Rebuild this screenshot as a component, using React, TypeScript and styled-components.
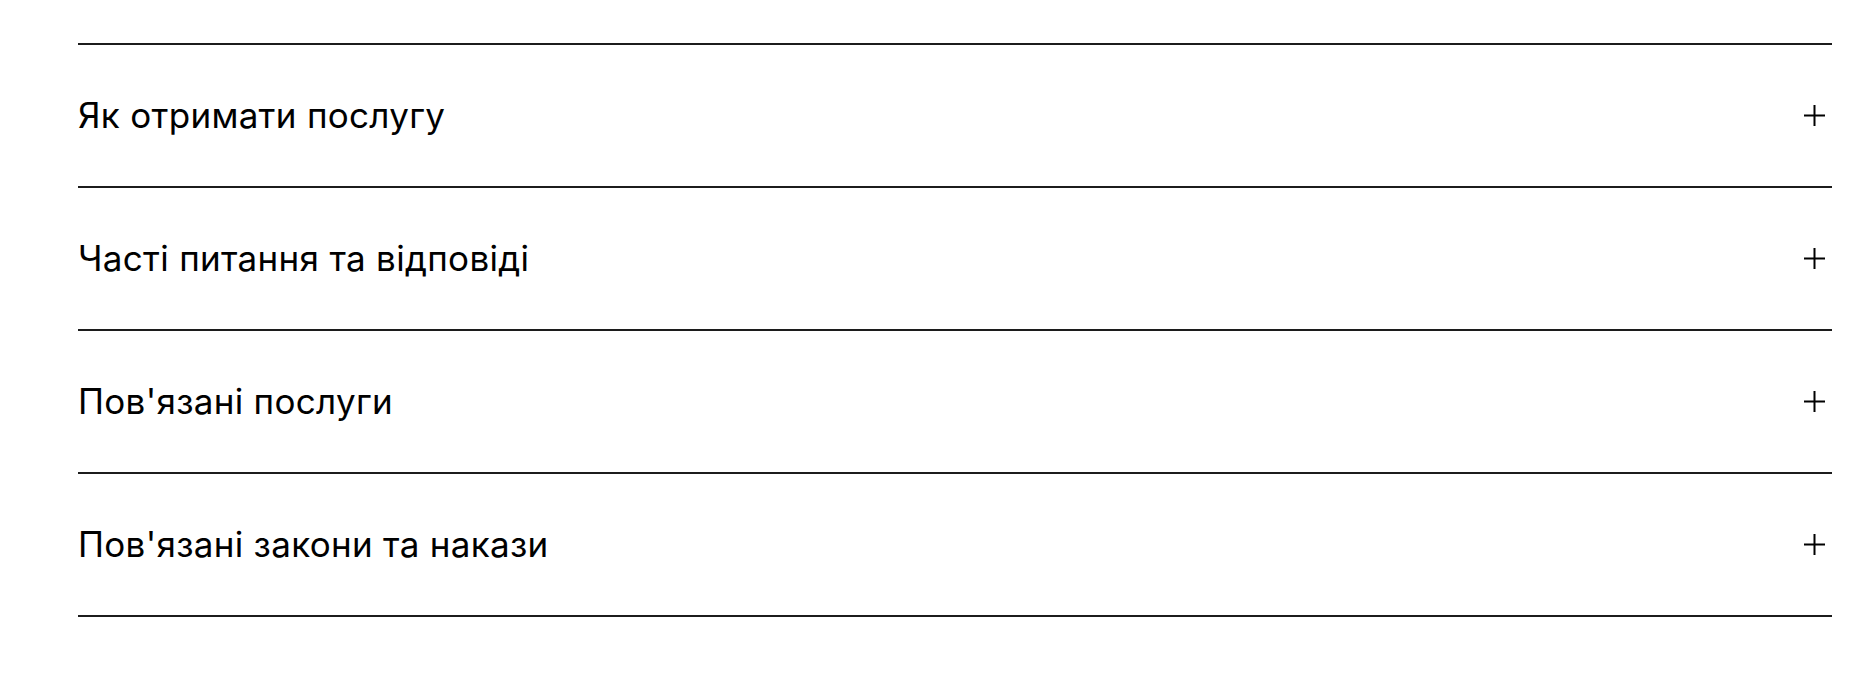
import React, { FC } from 'react'
import styled, { createGlobalStyle } from 'styled-components'

const GlobalStyle = createGlobalStyle`
  body {
    margin: 0;
    background: #fff;
    font-family: Inter, 'Liberation Sans', Arial, sans-serif;
    color: #000;
  }
`

const sections = [
  'Як отримати послугу',
  'Часті питання та відповіді',
  "Пов'язані послуги",
  "Пов'язані закони та накази",
]

const App: FC = () => {
  return (
    <Main>
      <GlobalStyle />
      <List>
        {sections.map((title) => (
          <Item key={title}>
            <Title>{title}</Title>
            <PlusIcon viewBox="0 0 20 20">
              <path d="M10 0v20M0 10h20" />
            </PlusIcon>
          </Item>
        ))}
      </List>
    </Main>
  )
}

export default App

const Main = styled.div`
  padding: 43px 24px 60px 78px;
  box-sizing: border-box;
`

const List = styled.div`
  display: flex;
  flex-direction: column;
  border-bottom: 2px solid #1c1c1c;
`

const Item = styled.div`
  display: flex;
  align-items: center;
  justify-content: space-between;
  height: 143px;
  box-sizing: border-box;
  border-top: 2px solid #1c1c1c;
  padding-right: 7px;
  cursor: pointer;
`

const Title = styled.h3`
  margin: 0;
  font-size: 35px;
  font-weight: normal;
  letter-spacing: 0.3px;
  line-height: 1;
`

const PlusIcon = styled.svg`
  width: 21px;
  height: 21px;
  stroke: #000;
  stroke-width: 1.9;
  fill: none;
`
